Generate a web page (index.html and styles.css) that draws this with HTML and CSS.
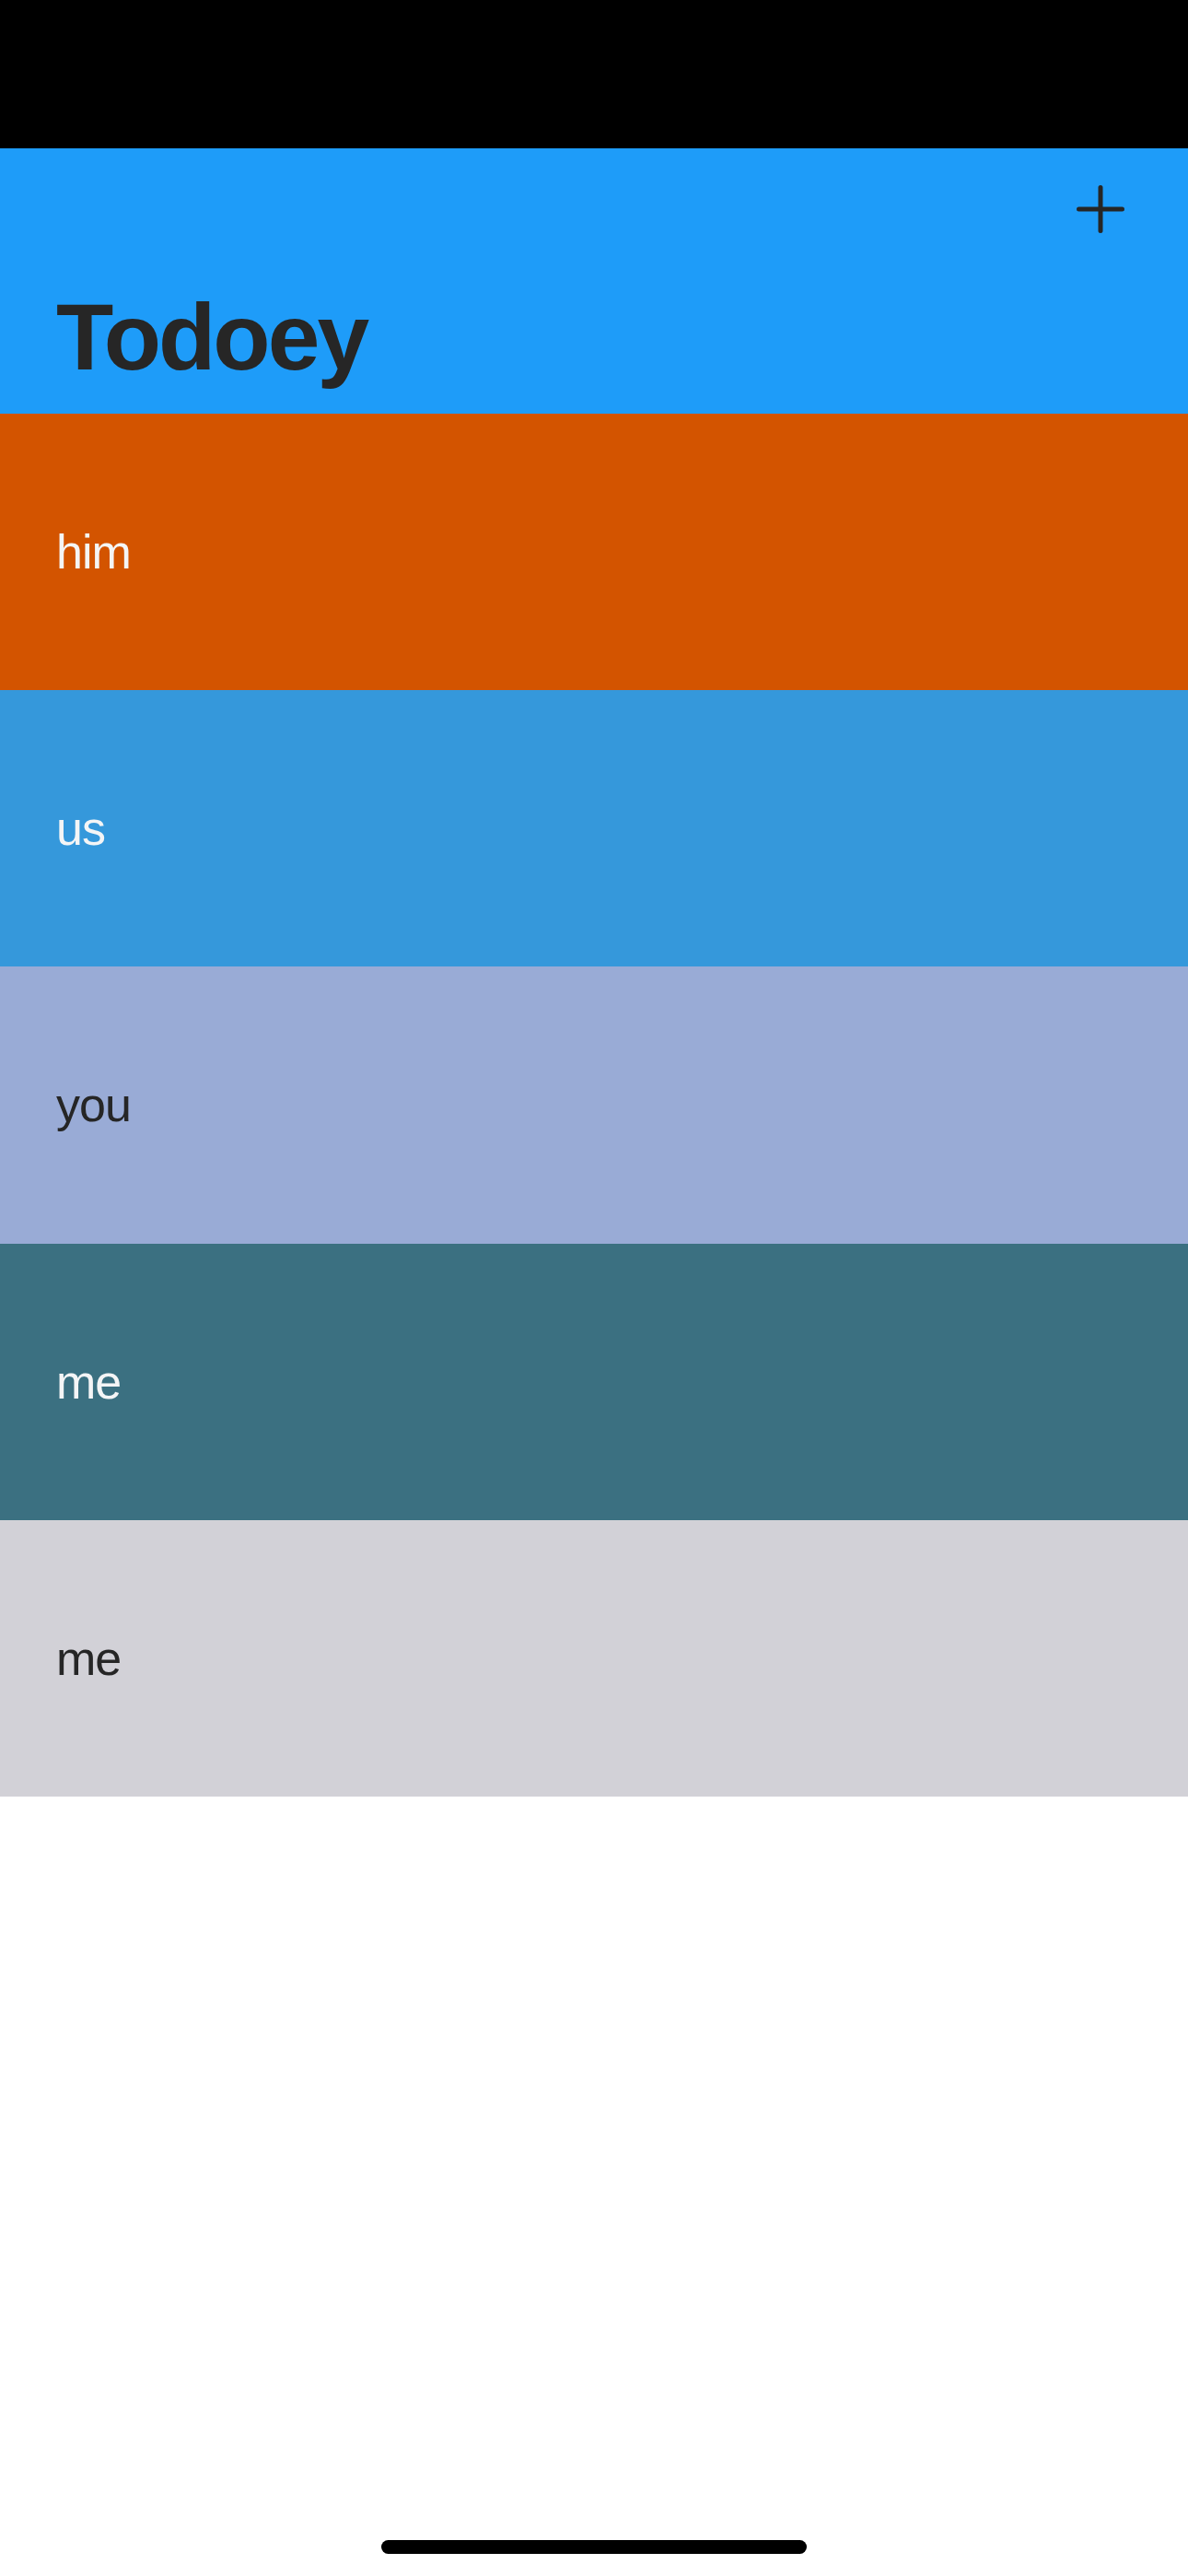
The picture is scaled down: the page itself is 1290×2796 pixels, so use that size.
FILE: index.html
```html
<!DOCTYPE html>
<html lang="en">
<head>
<meta charset="utf-8">
<title>Todoey</title>
<link rel="stylesheet" href="styles.css">
</head>
<body>
<div class="screen">
  <div class="status-bar"></div>
  <header class="nav">
    <button class="add-btn" aria-label="Add">
      <svg width="52" height="52" viewBox="0 0 52 52">
        <path d="M26 2.5 V49.5 M2.5 26 H49.5" stroke="#262626" stroke-width="5" stroke-linecap="round" fill="none"/>
      </svg>
    </button>
    <h1 class="title">Todoey</h1>
  </header>
  <ul class="list">
    <li class="row row-orange light-text">him</li>
    <li class="row row-blue light-text">us</li>
    <li class="row row-lavender dark-text">you</li>
    <li class="row row-teal light-text">me</li>
    <li class="row row-gray dark-text">me</li>
  </ul>
  <div class="spacer"></div>
  <div class="home-indicator"></div>
</div>
</body>
</html>
```
FILE: styles.css
```css
* { box-sizing: border-box; }
html, body {
  margin: 0;
  padding: 0;
  background: #ffffff;
}
body {
  font-family: "Liberation Sans", Arial, sans-serif;
}
.screen {
  width: 1290px;
  height: 2796px;
  display: flex;
  flex-direction: column;
  background: #ffffff;
  overflow: hidden;
}
.status-bar {
  height: 161px;
  background: #000000;
  flex: none;
}
.nav {
  height: 288px;
  flex: none;
  background: #1e9cf9;
  display: flex;
  flex-direction: column;
  padding: 40px 69px 32px 61px;
}
.add-btn {
  align-self: flex-end;
  width: 52px;
  height: 52px;
  padding: 0;
  margin: 0;
  border: none;
  background: transparent;
  display: block;
}
.add-btn svg { display: block; }
.title {
  margin: auto 0 0 0;
  font-size: 102px;
  line-height: 102px;
  font-weight: 700;
  letter-spacing: -3px;
  color: #262626;
}
.list {
  list-style: none;
  margin: 0;
  padding: 0;
  flex: none;
}
.row {
  height: 300.2px;
  display: flex;
  align-items: center;
  padding-left: 61px;
  font-size: 52px;
  letter-spacing: -1px;
}
.light-text { color: #f4f5f6; }
.dark-text { color: #262626; }
.row-orange { background: #d35400; }
.row-blue { background: #3598db; }
.row-lavender { background: #99abd6; }
.row-teal { background: #3b7081; }
.row-gray { background: #d2d1d7; }
.spacer { flex: 1; }
.home-indicator {
  flex: none;
  align-self: center;
  width: 462px;
  height: 15px;
  border-radius: 8px;
  background: #000000;
  margin-bottom: 24px;
}
```
